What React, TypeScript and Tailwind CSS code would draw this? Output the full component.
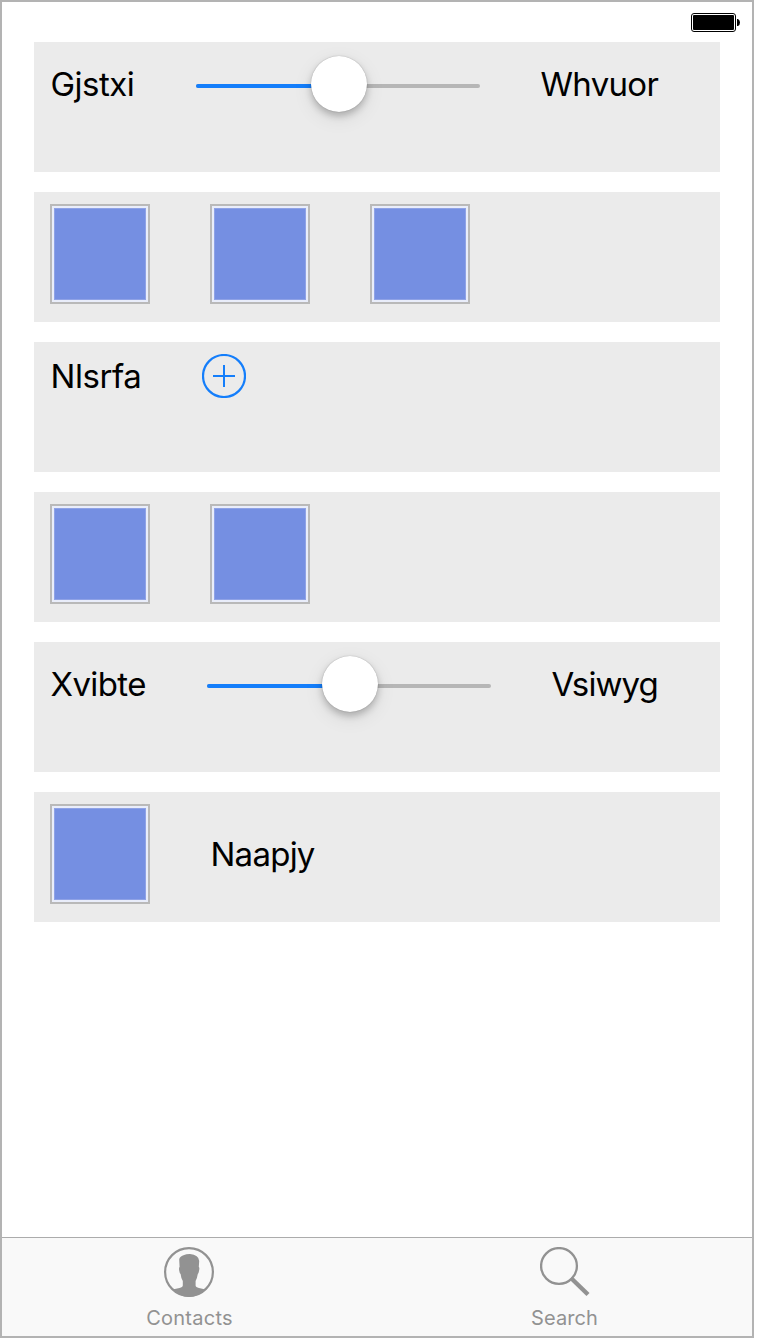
import React from "react";

function Row({ children }: { children: React.ReactNode }) {
  return <section className="flex h-[130px] items-start bg-[#ebebeb] pl-4">{children}</section>;
}

function Label({ children, className }: { children: string; className: string }) {
  return (
    <span className={`block shrink-0 whitespace-nowrap pl-[0.5px] text-[33px] leading-10 text-black ${className}`}>
      {children}
    </span>
  );
}

function Slider() {
  return (
    <div className="mt-[14px] grid h-14 w-[284px] shrink-0 items-center">
      <div className="col-start-1 row-start-1 mt-1 flex h-1 overflow-hidden rounded-full bg-[#b6b6b6]">
        <div className="h-1 w-1/2 bg-[#147efb]" />
      </div>
      <div className="col-start-1 row-start-1 ml-[2px] size-14 justify-self-center rounded-full bg-white shadow-[0_0_1px_rgba(0,0,0,0.35),0_4px_7px_rgba(0,0,0,0.22),0_6px_20px_rgba(0,0,0,0.09)]" />
    </div>
  );
}

function Tile() {
  return (
    <div className="mt-3 size-[100px] shrink-0 border-2 border-[#b9b9b9] bg-[#e9edfa] p-[2px]">
      <div className="size-full border border-[#8fa2e6] bg-[#758fe2]" />
    </div>
  );
}

function PlusIcon() {
  return (
    <svg className="mt-3 size-11 shrink-0" viewBox="0 0 44 44" fill="none" stroke="#147efb" strokeWidth="2">
      <circle cx="22" cy="22" r="21" strokeWidth="2.2" />
      <path d="M11 22h22M22 11v22" />
    </svg>
  );
}

function Battery() {
  return (
    <svg className="h-5 w-[50px]" viewBox="0 0 50 20">
      <rect x="0.5" y="0.5" width="44" height="18" rx="2.5" fill="white" stroke="black" />
      <rect x="2" y="2" width="41" height="15" rx="1" fill="black" />
      <path d="M46 6h1q2 1 2 3.5T47 13h-1z" fill="black" />
    </svg>
  );
}

function ContactsIcon() {
  return (
    <svg className="mr-[2px] h-[50px] w-[50px]" viewBox="0 0 50 50">
      <circle cx="25" cy="25" r="23.9" fill="none" stroke="#929292" strokeWidth="2.2" />
      <path
        d="M15.2 12.5Q15.6 9.5 19.5 8.3Q22.5 6.9 26 7Q34.8 7.8 35.2 14L34.8 20Q35.8 20.5 35 24Q34.6 26.5 33.8 27Q33.2 31 31.6 34V38.5Q31.6 40.3 35 41L41.5 42.5Q34 50 25 50T8.5 42.5L15.5 41Q18.8 40.3 18.8 38.5V34Q17 31 16.6 27Q15.6 26.5 15.2 23.5Q14.7 20.5 15.6 20Z"
        fill="#929292"
      />
    </svg>
  );
}

function SearchIcon() {
  return (
    <svg className="h-[50px] w-[50px]" viewBox="0 0 50 50" fill="none" stroke="#929292">
      <circle cx="19" cy="19" r="17.9" strokeWidth="2.3" />
      <path d="M32 32L48 47.5" strokeWidth="4.4" />
      <path d="M31 31L34 34" strokeWidth="2" />
    </svg>
  );
}

function Tab({ icon, label, className }: { icon: React.ReactNode; label: string; className: string }) {
  return (
    <button className="flex flex-1 flex-col items-center pt-[9px] text-[#929292]">
      {icon}
      <span className={`mt-[9px] whitespace-nowrap text-[20px] leading-6 ${className}`}>{label}</span>
    </button>
  );
}

export default function App() {
  return (
    <div className="h-[1340px] bg-white font-['Inter',sans-serif]">
      <div className="flex h-[1338px] w-[754px] flex-col border-2 border-[#b3b3b3] bg-white">
        <header className="flex h-10 shrink-0 justify-end pt-[11px] pr-[11px]">
          <Battery />
        </header>
        <main className="flex flex-1 flex-col gap-5 px-8">
          <Row>
            <Label className="mt-[22px] w-[146px] tracking-[-0.5px]">Gjstxi</Label>
            <Slider />
            <Label className="mt-[22px] ml-[60px] tracking-[-0.7px]">Whvuor</Label>
          </Row>
          <Row>
            <div className="flex gap-[60px]">
              <Tile />
              <Tile />
              <Tile />
            </div>
          </Row>
          <Row>
            <Label className="mt-[14px] w-[152px] tracking-[-0.45px]">Nlsrfa</Label>
            <PlusIcon />
          </Row>
          <Row>
            <div className="flex gap-[60px]">
              <Tile />
              <Tile />
            </div>
          </Row>
          <Row>
            <Label className="mt-[22px] w-[157px] tracking-[-0.6px]">Xvibte</Label>
            <Slider />
            <Label className="mt-[22px] ml-[60px] tracking-[-0.9px]">Vsiwyg</Label>
          </Row>
          <Row>
            <Tile />
            <Label className="mt-[42px] ml-[60px] tracking-[-0.75px]">Naapjy</Label>
          </Row>
        </main>
        <nav className="flex h-[99px] shrink-0 border-t border-[#acacac] bg-[#f9f9f9]">
          <Tab icon={<ContactsIcon />} label="Contacts" className="tracking-[0.25px]" />
          <Tab icon={<SearchIcon />} label="Search" className="tracking-[0.1px]" />
        </nav>
      </div>
    </div>
  );
}
